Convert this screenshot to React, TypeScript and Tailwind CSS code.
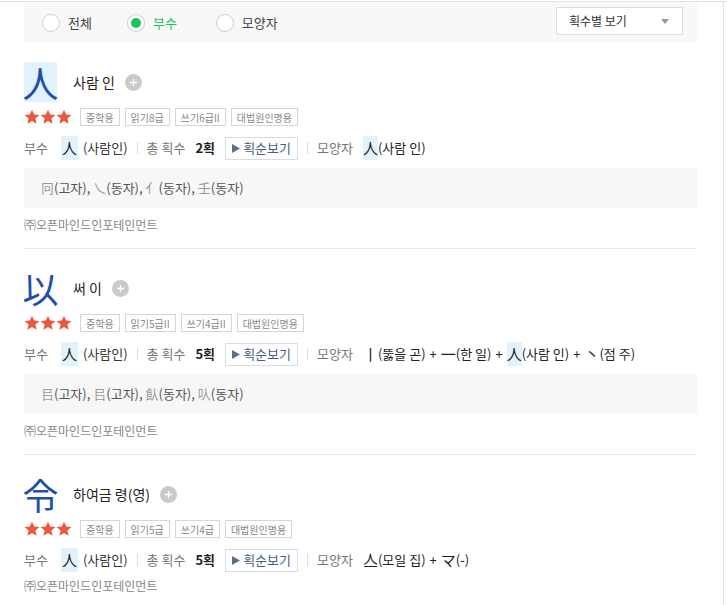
import React from 'react';

interface Part {
    h: string;
    t: string;
    hl?: boolean;
}

interface Entry {
    hanja: string;
    highlight: boolean;
    meaning: string;
    tags: string[];
    strokes: string;
    shape: Part[];
    variants: [string, string][];
}

const entries: Entry[] = [
    {
        hanja: '人',
        highlight: true,
        meaning: '사람 인',
        tags: ['중학용', '읽기8급', '쓰기6급II', '대법원인명용'],
        strokes: '2획',
        shape: [{ h: '人', t: '(사람 인)', hl: true }],
        variants: [['冋', '(고자)'], ['乀', '(동자)'], ['亻', ' (동자)'], ['壬', '(동자)']],
    },
    {
        hanja: '以',
        highlight: false,
        meaning: '써 이',
        tags: ['중학용', '읽기5급II', '쓰기4급II', '대법원인명용'],
        strokes: '5획',
        shape: [
            { h: '丨', t: '(뚫을 곤)' },
            { h: '一', t: '(한 일)' },
            { h: '人', t: '(사람 인)', hl: true },
            { h: '丶', t: '(점 주)' },
        ],
        variants: [['㠯', '(고자)'], ['㠯', '(고자)'], ['飤', '(동자)'], ['㕥', '(동자)']],
    },
    {
        hanja: '令',
        highlight: false,
        meaning: '하여금 령(영)',
        tags: ['중학용', '읽기5급', '쓰기4급', '대법원인명용'],
        strokes: '5획',
        shape: [
            { h: '亼', t: '(모일 집)' },
            { h: 'マ', t: '(-)' },
        ],
        variants: [],
    },
];

const font = { fontFamily: '"Noto Sans CJK KR", "Noto Sans", sans-serif' };

function Radio({ label, checked, className }: { label: string; checked?: boolean; className?: string }) {
    return (
        <label className={`flex items-center gap-2 ${className ?? ''}`}>
            <span className="w-[18px] h-[18px] rounded-full border border-[#cfcfcf] bg-white flex items-center justify-center">
                {checked && <span className="w-[10px] h-[10px] rounded-full bg-[#1ec35d]" />}
            </span>
            <span className={`text-[13px] ${checked ? 'text-[#1ec35d]' : 'text-[#444]'}`}>{label}</span>
        </label>
    );
}

function Star() {
    return (
        <svg className="w-[16px] h-[16px]" viewBox="0 0 24 24">
            <path d="M12 1l3.2 7.3 7.9.7-6 5.3 1.8 7.8L12 18l-6.9 4.1 1.8-7.8-6-5.3 7.9-.7z" fill="#e9573f" />
        </svg>
    );
}

function Divider() {
    return <span className="w-px h-[12px] bg-[#ddd] mx-[9px]" />;
}

function EntryBlock({ entry, last }: { entry: Entry; last: boolean }) {
    return (
        <div className={`pt-[19px] ${last ? 'pb-2' : 'pb-[15px] border-b border-[#e8e8e8]'}`}>
            <div className="flex items-center h-[40px]">
                <span
                    className={`w-[33px] h-[40px] flex items-center justify-center text-[36px] leading-none text-[#1f4fa8] ${entry.highlight ? 'bg-[#e1f2fc]' : ''}`}
                >
                    {entry.hanja}
                </span>
                <span className="ml-4 text-[14px] text-[#222]">{entry.meaning}</span>
                <span className="ml-[10px] w-[17px] h-[17px] rounded-full bg-[#cacaca] flex items-center justify-center">
                    <svg className="w-[9px] h-[9px]" viewBox="0 0 10 10">
                        <path d="M5 1v8M1 5h8" stroke="#fff" strokeWidth={1.4} />
                    </svg>
                </span>
            </div>
            <div className="flex items-center mt-[6px] h-[18px]">
                <div className="flex w-[56px]">
                    <Star />
                    <Star />
                    <Star />
                </div>
                <div className="flex gap-[5px]">
                    {entry.tags.map((t, i) => (
                        <span
                            key={i}
                            className="h-[18px] px-[5px] border border-[#d6d6d6] text-[10px] text-[#888] flex items-center"
                        >
                            {t}
                        </span>
                    ))}
                </div>
            </div>
            <div className="flex items-center mt-[10px] h-[24px] text-[13px]">
                <span className="text-[#777]">부수</span>
                <span className="ml-[13px] h-[24px] px-[1px] bg-[#e1f2fc] text-[15px] text-[#222] flex items-center">人</span>
                <span className="ml-[5px] text-[#333]">(사람인)</span>
                <Divider />
                <span className="text-[#777]">총 획수</span>
                <span className="ml-[10px] font-bold text-[#222]">{entry.strokes}</span>
                <span className="ml-[10px] h-[23px] w-[73px] border border-[#d7dde6] flex items-center justify-center gap-[3px] text-[#47607f]">
                    <svg className="w-[8px] h-[9px]" viewBox="0 0 8 9">
                        <path d="M0 0l8 4.5L0 9z" fill="#5a6f8d" />
                    </svg>
                    획순보기
                </span>
                <Divider />
                <span className="text-[#777]">모양자</span>
                <span className="ml-[10px] flex items-center text-[#222]">
                    {entry.shape.map((p, i) => (
                        <React.Fragment key={i}>
                            {i > 0 && <span className="mx-[4px]">+</span>}
                            <span className={`h-[24px] flex items-center text-[15px] ${p.hl ? 'bg-[#e1f2fc]' : ''}`}>{p.h}</span>
                            <span>{p.t}</span>
                        </React.Fragment>
                    ))}
                </span>
            </div>
            {entry.variants.length > 0 && (
                <div className="mt-2 h-[40px] bg-[#f7f7f7] flex items-center px-[17px] text-[13px] text-[#555]">
                    {entry.variants.map((v, i) => (
                        <React.Fragment key={i}>
                            {i > 0 && <span>,&nbsp;</span>}
                            <span className="text-[#999]">{v[0]}</span>
                            <span>{v[1]}</span>
                        </React.Fragment>
                    ))}
                </div>
            )}
            <div className={`${entry.variants.length > 0 ? 'mt-[9px]' : 'mt-[6px]'} text-[12px] leading-[16px] text-[#888]`}>
                ㈜오픈마인드인포테인먼트
            </div>
        </div>
    );
}

export default function App() {
    return (
        <div className="pt-px bg-white" style={font}>
            <div className="border-t border-[#e2e2e2]">
                <div className="w-[724px] min-h-[604px] border-r border-[#e2e2e2] pl-6 pr-[26px]">
                    <div className="h-[41px] bg-[#f8f8f8] flex items-center pl-[18px] pr-[14px]">
                        <div className="flex items-center">
                            <Radio label="전체" />
                            <Radio label="부수" checked className="ml-[35px]" />
                            <Radio label="모양자" className="ml-[39px]" />
                        </div>
                        <div className="ml-auto w-[127px] h-[28px] bg-white border border-[#dcdcdc] flex items-center justify-between pl-[12px] pr-[13px] -mt-[3px]">
                            <span className="text-[12px] text-[#333]">획수별 보기</span>
                            <span className="w-0 h-0 border-l-[4px] border-r-[4px] border-t-[5px] border-l-transparent border-r-transparent border-t-[#999]" />
                        </div>
                    </div>
                    {entries.map((e, i) => (
                        <EntryBlock key={i} entry={e} last={i === entries.length - 1} />
                    ))}
                </div>
            </div>
        </div>
    );
}
